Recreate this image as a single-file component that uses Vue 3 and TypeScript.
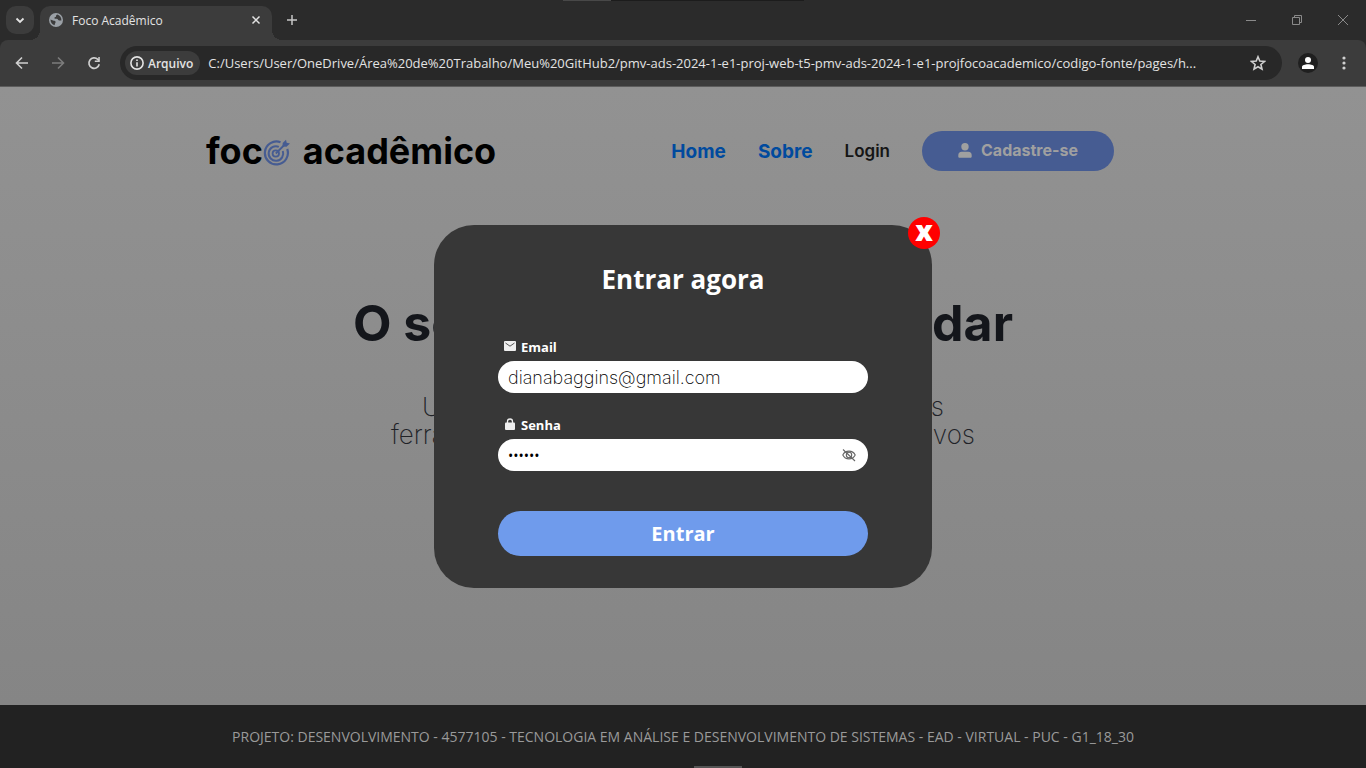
<script setup lang="ts">
import { ref } from 'vue'

const address = ref<string>(
  'C:/Users/User/OneDrive/Área%20de%20Trabalho/Meu%20GitHub2/pmv-ads-2024-1-e1-proj-web-t5-pmv-ads-2024-1-e1-projfocoacademico/codigo-fonte/pages/h...'
)
const email = ref<string>('dianabaggins@gmail.com')
const password = ref<string>('foco24')
const showPassword = ref<boolean>(false)
const modalOpen = ref<boolean>(true)
</script>

<template>
  <div class="window">
    <header class="browser">
      <div class="tabs">
        <button class="tab-search" aria-label="Pesquisar guias">
          <svg width="10" height="7" viewBox="0 0 10 7"><path d="M1.5 1.5 5 5l3.500-3.500" fill="none" stroke="#e3e3e3" stroke-width="1.8" /></svg>
        </button>
        <div class="tab">
          <svg class="globe" width="14" height="14" viewBox="0 0 14 14">
            <circle cx="7" cy="7" r="7" fill="#9aa0a6" />
            <path d="M1.500 6.500 4 7.500c1 .3 2 .2 2.500 1v1.300c-.5.600-.8 1.200-.8 2.500C3.200 11.800 1.400 9.500 1.500 6.500ZM8.500 1.600C7.500 2 6.800 2.800 7 3.700c-1 .1-1.800.8-1.500 1.700.7.700 2.200 0 3 .7.700.6.700 1.400 1.700 1.400h2.200c.2-2.500-1.400-5-3.900-5.900Z" fill="#3c3c3c" />
          </svg>
          <span class="tab-title">Foco Acadêmico</span>
          <button class="bare" aria-label="Fechar guia">
            <svg width="10" height="10" viewBox="0 0 10 10"><path d="m1.500 1.500 7 7m0-7-7 7" stroke="#e3e3e3" stroke-width="1.500" /></svg>
          </button>
        </div>
        <button class="bare new-tab" aria-label="Nova guia">
          <svg width="12" height="12" viewBox="0 0 12 12"><path d="M6 1v10M1 6h10" stroke="#c7c7c7" stroke-width="1.500" /></svg>
        </button>
        <div class="window-buttons">
          <button class="bare" aria-label="Minimizar"><svg width="12" height="12" viewBox="0 0 12 12"><path d="M1 6.500h10" stroke="#8a8a8a" /></svg></button>
          <button class="bare" aria-label="Restaurar"><svg width="12" height="12" viewBox="0 0 12 12"><path d="M1.500 3.500h7v7h-7zM3.500 3.500v-2h7v7h-2" fill="none" stroke="#8a8a8a" /></svg></button>
          <button class="bare" aria-label="Fechar"><svg width="12" height="12" viewBox="0 0 12 12"><path d="m1 1 10 10M11 1 1 11" stroke="#8a8a8a" /></svg></button>
        </div>
      </div>
      <div class="toolbar">
        <div class="nav-buttons">
          <button class="bare" aria-label="Voltar"><svg width="14" height="14" viewBox="0 0 14 14"><path d="M13 7H2m5-5.500L1.500 7 7 12.500" fill="none" stroke="#d0d0d0" stroke-width="1.600" /></svg></button>
          <button class="bare" aria-label="Avançar"><svg width="14" height="14" viewBox="0 0 14 14"><path d="M1 7h11M7 1.500 12.500 7 7 12.500" fill="none" stroke="#7c7c7c" stroke-width="1.600" /></svg></button>
          <button class="bare" aria-label="Recarregar"><svg width="14" height="14" viewBox="0 0 14 14"><path d="M12.200 8.200A5.200 5.200 0 1 1 10.800 3.400l1.200 1.200" fill="none" stroke="#d0d0d0" stroke-width="1.700" /><path d="M12.800 1v5h-5V4.500h3.500V1z" fill="#d0d0d0" /></svg></button>
        </div>
        <div class="omnibox">
          <button class="scheme">
            <svg width="14" height="14" viewBox="0 0 14 14"><circle cx="7" cy="7" r="6.100" fill="none" stroke="#e3e3e3" stroke-width="1.600" /><path d="M7 6.200v4.200M7 3.500v1.600" stroke="#e3e3e3" stroke-width="1.600" /></svg>
            Arquivo
          </button>
          <input v-model="address" class="address" type="text" aria-label="Endereço" spellcheck="false" />
          <button class="bare" aria-label="Favoritar">
            <svg width="16" height="16" viewBox="0 0 16 16"><path d="m8 1.800 1.800 4.300 4.700.4-3.600 3 1.100 4.600L8 11.700l-4 2.400 1.100-4.600-3.600-3 4.700-.4z" fill="none" stroke="#d0d0d0" stroke-width="1.600" /></svg>
          </button>
        </div>
        <button class="profile" aria-label="Perfil">
          <svg width="12" height="12" viewBox="0 0 12 12"><circle cx="6" cy="3" r="3" fill="#fff" /><path d="M0 12V9.900C0 8.300 3 7.300 6 7.300s6 1 6 2.600V12z" fill="#fff" /></svg>
        </button>
        <button class="bare" aria-label="Menu">
          <svg width="4" height="14" viewBox="0 0 4 14" fill="#d0d0d0"><circle cx="2" cy="2" r="1.600" /><circle cx="2" cy="7" r="1.600" /><circle cx="2" cy="12" r="1.600" /></svg>
        </button>
      </div>
    </header>

    <main class="page">
      <div class="site-header">
        <a class="logo" href="#" aria-label="foco acadêmico">
          <span>foc</span>
          <svg width="28" height="28" viewBox="0 0 28 28" fill="none" stroke="#465c92">
            <path d="M17.500 3.200A11.500 11.500 0 1 0 24.200 10" stroke-width="2.200" />
            <path d="M15.800 7.800A7.300 7.300 0 1 0 19.800 12" stroke-width="2" />
            <circle cx="12.800" cy="14.500" r="3.200" stroke-width="1.800" />
            <path d="m12.800 14.500 9.500-9.500" stroke-width="1.800" />
            <path d="m19.500 7.500.2-3.500L23 .8l.7 3 3.300.8-3.500 3.100z" fill="#465c92" stroke="none" />
          </svg>
          <span>acadêmico</span>
        </a>
        <nav class="site-nav">
          <a class="link" href="#">Home</a>
          <a class="link" href="#">Sobre</a>
          <a class="login" href="#" @click.prevent="modalOpen = true">Login</a>
          <button class="register">
            <svg width="14" height="15" viewBox="0 0 14 15" fill="#a0a0a0"><circle cx="7" cy="3.700" r="3.700" /><path d="M4 8.700h6a3.600 3.600 0 0 1 3.700 3.600v1.200c0 .8-.6 1.300-1.300 1.300H1.600c-.8 0-1.300-.5-1.300-1.300v-1.200A3.600 3.600 0 0 1 4 8.700Z" /></svg>
            Cadastre-se
          </button>
        </nav>
      </div>

      <section class="hero">
        <h1><span>O seu</span><span>estudar</span></h1>
        <p class="first"><span>U</span><span>s</span></p>
        <p class="second"><span>ferra</span><span>tivos</span></p>
      </section>

      <div v-if="modalOpen" class="overlay">
        <form class="modal" @submit.prevent>
          <button class="close" type="button" aria-label="Fechar" @click="modalOpen = false">x</button>
          <h2>Entrar agora</h2>
          <label for="email">
            <svg width="12" height="12" viewBox="0 0 12 12"><rect width="12" height="10" rx="1" fill="#eee" /><path d="m1.500 2 4.500 3.200L10.500 2" fill="none" stroke="#555" /></svg>
            Email
          </label>
          <div class="field"><input id="email" v-model="email" type="email" /></div>
          <label for="password">
            <svg width="12" height="14" viewBox="0 0 12 14"><path d="M3.500 5V3.500a2.500 2.500 0 0 1 5 0V5" fill="none" stroke="#eee" stroke-width="1.300" /><rect x="1" y="4.500" width="10" height="7.500" rx="1" fill="#eee" /></svg>
            Senha
          </label>
          <div class="field">
            <input id="password" v-model="password" class="password" :type="showPassword ? 'text' : 'password'" />
            <button class="bare" type="button" aria-label="Mostrar senha" @click="showPassword = !showPassword">
              <svg width="14" height="14" viewBox="0 0 14 14" fill="none" stroke="#666" stroke-width="1.100"><path d="M.8 7C2 4.500 4.200 3.100 7 3.100S12 4.500 13.200 7c-1.200 2.500-3.400 3.900-6.200 3.900S2 9.500.8 7Z" /><circle cx="7" cy="7" r="2.700" /><path d="m1 1.500 12 11.500" /></svg>
            </button>
          </div>
          <button class="submit" type="submit">Entrar</button>
        </form>
      </div>
    </main>

    <footer class="footer">
      PROJETO: DESENVOLVIMENTO - 4577105 - TECNOLOGIA EM ANÁLISE E DESENVOLVIMENTO DE SISTEMAS - EAD - VIRTUAL - PUC - G1_18_30
    </footer>
  </div>
</template>

<style>
body { margin: 0; background: #222; }
</style>

<style scoped>
* { box-sizing: border-box; }
button { font-family: inherit; cursor: pointer; }
svg { display: block; flex: none; }
.window {
  display: flex;
  flex-direction: column;
  min-height: 100vh;
  font-family: "Open Sans", "Noto Sans", sans-serif;
}
.bare { display: flex; padding: 0; border: 0; background: none; }
.browser { background: #2b2b2b; }
.tabs {
  display: flex; align-items: center; height: 40px; padding: 0 17px 0 6px;
  background: linear-gradient(90deg, #484848 48px, #1c1c1c 48px) 50% 0 / 241px 1px no-repeat;
}
.tab-search {
  display: flex; align-items: center; justify-content: center;
  width: 28px; height: 28px; padding: 0; border: 0; border-radius: 10px; background: #3c3c3c;
}
.tab {
  position: relative;
  display: flex; align-items: center; align-self: flex-end;
  width: 232px; height: 34px; margin-left: 6px; padding: 0 11px 6px 9px;
  border-radius: 10px 10px 0 0; background: #3c3c3c;
}
.tab::before, .tab::after {
  content: ""; position: absolute; bottom: 0; width: 10px; height: 10px;
}
.tab::before { right: 100%; background: radial-gradient(circle at 0 0, transparent 10px, #3c3c3c 10px); }
.tab::after { left: 100%; background: radial-gradient(circle at 100% 0, transparent 10px, #3c3c3c 10px); }
.tab-title { flex: 1; margin-left: 9px; color: #e3e3e3; font-size: 12px; line-height: 20px; }
.tab-title { padding-top: 2px; }
.new-tab { margin-left: 14px; }
.window-buttons { display: flex; gap: 34px; margin-left: auto; }
.toolbar {
  display: flex; align-items: center; height: 47px; padding: 0 20px 0 15px;
  border-bottom: 1px solid #5c5c5c; border-radius: 8px 8px 0 0; background: #3c3c3c;
}
.nav-buttons { display: flex; gap: 22px; margin-right: 19px; }
.omnibox {
  display: flex; flex: 1; align-items: center; min-width: 0; height: 34px;
  padding: 0 16px 0 5px; border-radius: 17px; background: #282828;
}
.scheme {
  display: flex; align-items: center; gap: 4px; height: 24px; padding: 0 7px 0 5px;
  border: 0; border-radius: 12px; background: #3c3c3c; color: #e3e3e3;
  font-size: 12px; font-weight: 600;
}
.address {
  flex: 1; min-width: 0; margin: 0 14px 0 8px; padding: 0; border: 0; outline: 0; background: none;
  color: #e3e3e3; font-family: inherit; font-size: 13px; line-height: 20px;
}
.profile {
  display: flex; align-items: center; justify-content: center; width: 20px; height: 20px;
  margin: 0 24px 0 16px; padding: 0; border: 0; border-radius: 50%; background: #1f1f1f;
}
.page {
  display: flow-root; position: relative; flex: 1;
  background: linear-gradient(#929292, #858585);
  font-family: Inter, "Open Sans", sans-serif;
}
.site-header {
  display: flex; align-items: center; justify-content: space-between;
  margin-top: 44px; height: 40px; padding: 0 252px 0 206px;
}
.logo { display: flex; align-items: center; color: #000; font-size: 36px; font-weight: 700; line-height: 40px; text-decoration: none; }
.logo svg { margin: 4px 12px 0 0; }
.site-nav { display: flex; align-items: center; gap: 32px; }
.link { color: #004a9e; font-size: 19px; font-weight: 700; text-decoration: none; }
.login { color: #151515; font-size: 17px; font-weight: 600; text-decoration: none; }
.register {
  display: flex; align-items: center; justify-content: center; gap: 9px;
  width: 192px; height: 40px; padding: 0 0 2px; border: 0; border-radius: 20px;
  background: #465c92; color: #a0a0a0; font-size: 16px; font-weight: 700;
}
.hero { display: flex; flex-direction: column; align-items: center; margin-top: 124px; }
.hero h1, .hero p { display: flex; justify-content: space-between; margin: 0; }
.hero h1 { width: 660px; color: #14161b; font-size: 50px; font-weight: 700; line-height: 56px; }
.hero p { color: #202227; font-size: 26px; font-weight: 200; line-height: 28px; }
.hero .first { width: 522px; margin-top: 42px; }
.hero .second { width: 584px; }
.overlay { position: absolute; inset: 0; display: flex; align-items: flex-start; justify-content: center; }
.modal {
  position: relative; display: flex; flex-direction: column; width: 498px; margin-top: 138px;
  padding: 32px 64px; border-radius: 40px; background: #373737; color: #fff;
  font-family: "Open Sans", "Noto Sans", sans-serif;
}
.close {
  position: absolute; top: -8px; right: -8px; width: 32px; height: 32px; padding: 0 0 6px;
  border: 0; border-radius: 50%; background: #f00; color: #fff;
  font-size: 28px; font-weight: 800; line-height: 24px;
}
.modal h2 { margin: 0 0 36px; font-size: 26px; font-weight: 700; line-height: 44px; text-align: center; }
.modal label { display: flex; align-items: center; gap: 5px; height: 20px; margin: 0 0 4px 6px; font-size: 13px; font-weight: 700; }
.field {
  display: flex; align-items: center; height: 32px; margin-bottom: 22px; padding: 0 12px 0 10px;
  border-radius: 16px; background: #fff;
}
.field input {
  flex: 1; min-width: 0; padding: 0; border: 0; outline: 0; background: none; color: #000;
  font-family: Inter, sans-serif; font-size: 18px; font-weight: 200;
}
.field .password { font-family: "Open Sans", sans-serif; font-size: 14px; font-weight: 400; }
.submit {
  height: 45px; margin-top: 18px; padding: 0; border: 0; border-radius: 23px;
  background: #6f9bec; color: #fff; font-size: 20px; font-weight: 700;
}
.footer {
  display: flex; align-items: center; justify-content: center; min-height: 63px;
  background: linear-gradient(#555, #555) 694px 100% / 48px 2px no-repeat, #222;
  color: #9a9a9a; font-size: 14px; line-height: 20px; text-align: center;
}
</style>
